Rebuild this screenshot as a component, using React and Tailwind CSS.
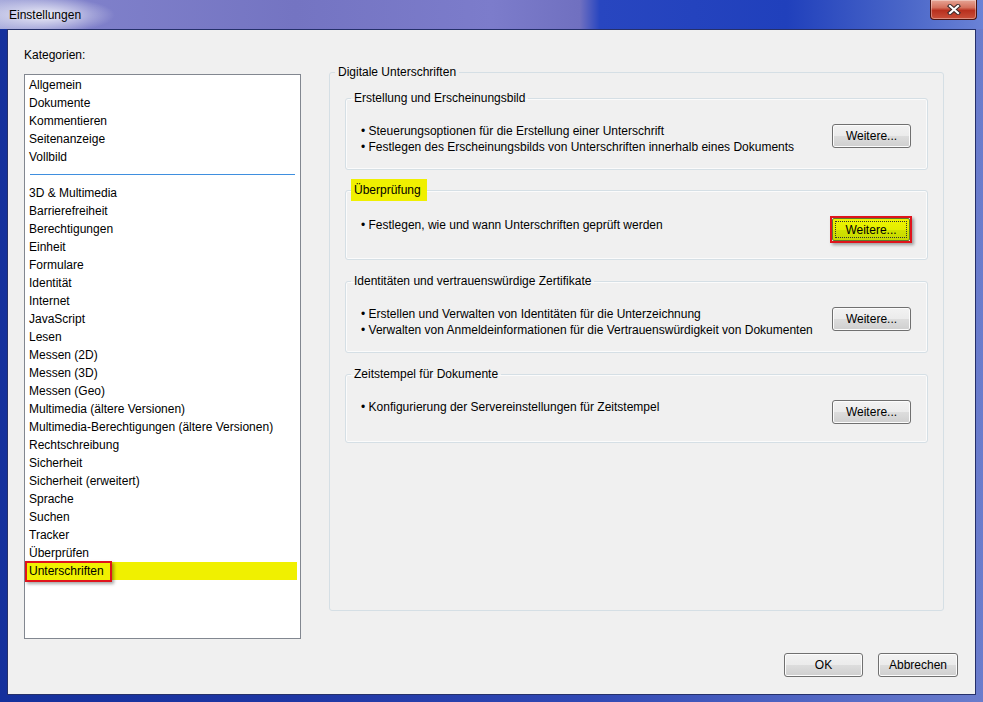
import React from "react";

const categoriesTop = ["Allgemein", "Dokumente", "Kommentieren", "Seitenanzeige", "Vollbild"];
const categoriesBottom = [
  "3D & Multimedia",
  "Barrierefreiheit",
  "Berechtigungen",
  "Einheit",
  "Formulare",
  "Identität",
  "Internet",
  "JavaScript",
  "Lesen",
  "Messen (2D)",
  "Messen (3D)",
  "Messen (Geo)",
  "Multimedia (ältere Versionen)",
  "Multimedia-Berechtigungen (ältere Versionen)",
  "Rechtschreibung",
  "Sicherheit",
  "Sicherheit (erweitert)",
  "Sprache",
  "Suchen",
  "Tracker",
  "Überprüfen",
];

const btnBase =
  "w-[79px] h-[24px] shrink-0 rounded-[3px] border border-[#707070] text-[12px] leading-[16px] text-black bg-[linear-gradient(to_bottom,#f2f2f2_0%,#ebebeb_50%,#dddddd_50%,#cfcfcf_100%)] shadow-[inset_0_0_0_1px_#fcfcfc]";

function WinButton({ children, className = "" }) {
  return (
    <button type="button" className={`${btnBase} ${className}`}>
      {children}
    </button>
  );
}

function CloseButton() {
  return (
    <div className="ml-auto mr-[6px] w-[47px] h-[20px] rounded-b-[4px] border border-t-0 border-[#4a1410] bg-[linear-gradient(to_bottom,#e6a595_0%,#d4705c_40%,#b8301e_55%,#c9503a_100%)] shadow-[inset_0_0_0_1px_rgba(255,255,255,0.35)] flex items-center justify-center">
      <svg width="14" height="11" viewBox="0 0 14 11">
        <path d="M3 2 L11 9 M11 2 L3 9" stroke="#3b2a2a" strokeWidth="4.2" strokeLinecap="square" />
        <path d="M3 2 L11 9 M11 2 L3 9" stroke="#ffffff" strokeWidth="2.2" strokeLinecap="square" />
      </svg>
    </div>
  );
}

function Group({ title, lines, heightClass, marginClass = "", highlight = false }) {
  return (
    <fieldset className={`${heightClass} ${marginClass} border border-[#d5dfe5] rounded-[3px] shadow-[inset_0_0_0_1px_#fbfbfb]`}>
      <legend
        className={
          highlight
            ? "ml-[5px] pl-[3px] pr-[6px] py-[3px] leading-[16px] bg-[#f0f000]"
            : "ml-[5px] px-[3px] leading-[16px]"
        }
      >
        {title}
      </legend>
      <div className={`flex items-start justify-between pl-[15px] pr-[16px] ${highlight ? "pt-[15px]" : "pt-[17px]"}`}>
        <div className={`flex flex-col ${highlight ? "pt-[1px]" : ""}`}>
          {lines.map((l) => (
            <div key={l} className="leading-[16px] whitespace-nowrap">
              {"• " + l}
            </div>
          ))}
        </div>
        {highlight ? (
          <div className="-mr-[1px] w-[82px] h-[27px] border-2 border-[#e0141c] shadow-[2px_2px_3px_rgba(0,0,0,0.35)] flex">
            <button
              type="button"
              className="flex-1 border border-[#5f7a2a] rounded-[2px] bg-[linear-gradient(to_bottom,#eef400_0%,#e4ee00_50%,#d2e200_50%,#c6d800_100%)] text-[12px] leading-[16px] text-black p-[2px] flex"
            >
              <span className="flex-1 border border-dotted border-[#333] flex items-center justify-center">Weitere...</span>
            </button>
          </div>
        ) : (
          <WinButton className="mt-[1px]">Weitere...</WinButton>
        )}
      </div>
    </fieldset>
  );
}

export default function App() {
  return (
    <div className="w-[983px] h-[702px] overflow-hidden flex flex-col text-[12px] text-black font-['Liberation_Sans',Arial,sans-serif] bg-[linear-gradient(to_right,#14309c_0%,#1e36a4_30%,#3048b4_60%,#5c70c8_90%,#6a7ccc_100%)]">
      {/* title bar */}
      <div className="h-[29px] shrink-0 flex items-start bg-[radial-gradient(ellipse_70px_18px_at_45px_15px,rgba(255,255,255,0.85),rgba(255,255,255,0)_100%),linear-gradient(to_right,#a9acdc_0%,#7f80ca_9%,#7474c2_30%,#7c7ccb_50%,#7070c0_59%,#2846c0_61%,#2040bc_80%,#4a66c8_92%,#6a82d6_100%)]">
        <span className="pl-[9px] pt-[7px] leading-[16px]">Einstellungen</span>
        <CloseButton />
      </div>

      {/* client area */}
      <div className="mx-[7px] h-[666px] shrink-0 border border-[#25306a] bg-[#f0f0f0] flex flex-col">
        <div className="flex pt-[17px] pl-[16px]">
          {/* categories */}
          <div className="w-[277px] flex flex-col">
            <div className="leading-[16px]">Kategorien:</div>
            <div className="mt-[11px] h-[565px] border border-[#828790] bg-white pt-[1px] flex flex-col">
              {categoriesTop.map((c) => (
                <div key={c} className="ml-[1px] mr-[3px] h-[18px] leading-[18px] pl-[3px] whitespace-nowrap">
                  {c}
                </div>
              ))}
              <div className="ml-[5px] mr-[5px] h-[18px] pt-[8px]">
                <div className="h-px bg-[#3f8fdf]" />
              </div>
              {categoriesBottom.map((c) => (
                <div key={c} className="ml-[1px] mr-[3px] h-[18px] leading-[18px] pl-[3px] whitespace-nowrap">
                  {c}
                </div>
              ))}
              <div className="relative ml-[1px] mr-[3px] h-[18px] leading-[18px] pl-[3px] bg-[#f0f000]">
                Unterschriften
                <span className="absolute left-[-1px] top-[-1px] w-[87px] h-[21px] border-2 border-[#e0141c] shadow-[2px_2px_3px_rgba(0,0,0,0.35)]" />
              </div>
            </div>
          </div>

          {/* right panel */}
          <div className="ml-[28px] mt-[17px] w-[615px]">
            <fieldset className="h-[547px] border border-[#d5dfe5] rounded-[3px]">
              <legend className="ml-[5px] px-[3px] leading-[16px]">Digitale Unterschriften</legend>
              <div className="pt-[10px] px-[15px] flex flex-col">
                <Group
                  title="Erstellung und Erscheinungsbild"
                  heightClass="h-[80px]"
                  lines={[
                    "Steuerungsoptionen für die Erstellung einer Unterschrift",
                    "Festlegen des Erscheinungsbilds von Unterschriften innerhalb eines Dokuments",
                  ]}
                />
                <Group
                  title="Überprüfung"
                  heightClass="h-[81px]"
                  marginClass="mt-[9px]"
                  highlight
                  lines={["Festlegen, wie und wann Unterschriften geprüft werden"]}
                />
                <Group
                  title="Identitäten und vertrauenswürdige Zertifikate"
                  heightClass="h-[80px]"
                  marginClass="mt-[13px]"
                  lines={[
                    "Erstellen und Verwalten von Identitäten für die Unterzeichnung",
                    "Verwalten von Anmeldeinformationen für die Vertrauenswürdigkeit von Dokumenten",
                  ]}
                />
                <Group
                  title="Zeitstempel für Dokumente"
                  heightClass="h-[77px]"
                  marginClass="mt-[13px]"
                  lines={["Konfigurierung der Servereinstellungen für Zeitstempel"]}
                />
              </div>
            </fieldset>
          </div>
        </div>

        {/* footer buttons */}
        <div className="mt-auto flex justify-end gap-[15px] pr-[17px] pb-[17px]">
          <WinButton>OK</WinButton>
          <WinButton className="w-[80px]">Abbrechen</WinButton>
        </div>
      </div>
    </div>
  );
}
